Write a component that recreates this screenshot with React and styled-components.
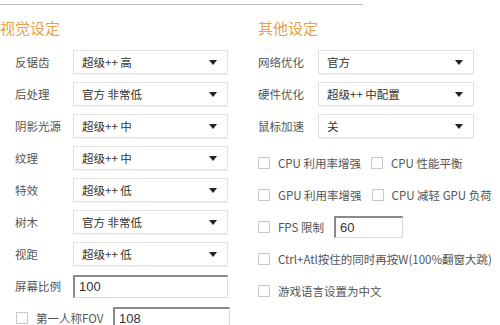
import React from 'react';
import styled, { createGlobalStyle } from 'styled-components';

const leftRows = [
  { label: '反锯齿', value: '超级++ 高' },
  { label: '后处理', value: '官方 非常低' },
  { label: '阴影光源', value: '超级++ 中' },
  { label: '纹理', value: '超级++ 中' },
  { label: '特效', value: '超级++ 低' },
  { label: '树木', value: '官方 非常低' },
  { label: '视距', value: '超级++ 低' },
];

const rightRows = [
  { label: '网络优化', value: '官方' },
  { label: '硬件优化', value: '超级++ 中配置' },
  { label: '鼠标加速', value: '关' },
];

function Select({ value, width }) {
  return (
    <SelectBox width={width}>
      <span>{value}</span>
      <Arrow />
    </SelectBox>
  );
}

function Check({ children }) {
  return (
    <CheckItem>
      <Box />
      <span>{children}</span>
    </CheckItem>
  );
}

export default function App() {
  return (
    <Page>
      <GlobalStyle />
      <TopLine />
      <Columns>
        <LeftCol>
          <Title>视觉设定</Title>
          <Rows>
            {leftRows.map((r) => (
              <Row key={r.label}>
                <Label>{r.label}</Label>
                <Select value={r.value} width={155} />
              </Row>
            ))}
            <Row>
              <Label>屏幕比例</Label>
              <TextInput width={155}>100</TextInput>
            </Row>
            <Row>
              <FovCheck>
                <Check>第一人称FOV</Check>
              </FovCheck>
              <TextInput width={117}>108</TextInput>
            </Row>
          </Rows>
        </LeftCol>
        <RightCol>
          <Title>其他设定</Title>
          <Rows>
            {rightRows.map((r) => (
              <Row key={r.label}>
                <RightLabel>{r.label}</RightLabel>
                <Select value={r.value} width={156} />
              </Row>
            ))}
          </Rows>
          <Checks>
            <CheckLine>
              <Check>CPU 利用率增强</Check>
              <Check>CPU 性能平衡</Check>
            </CheckLine>
            <CheckLine>
              <Check>GPU 利用率增强</Check>
              <Check>CPU 减轻 GPU 负荷</Check>
            </CheckLine>
            <CheckLine>
              <Check>FPS 限制</Check>
              <TextInput width={69} small>60</TextInput>
            </CheckLine>
            <CheckLine>
              <Check>Ctrl+Atl按住的同时再按W(100%翻窗大跳)</Check>
            </CheckLine>
            <CheckLine>
              <Check>游戏语言设置为中文</Check>
            </CheckLine>
          </Checks>
        </RightCol>
      </Columns>
    </Page>
  );
}

const GlobalStyle = createGlobalStyle`
  body {
    margin: 0;
    background: #ffffff;
    font-family: "Noto Sans CJK SC", "Liberation Sans", sans-serif;
    font-size: 11.5px;
    color: #555;
  }
`;

const Page = styled.div`
  width: 500px;
  height: 325px;
  overflow: hidden;
  padding-top: 4px;
  box-sizing: border-box;
`;

const TopLine = styled.div`
  width: 363px;
  height: 1px;
  background: #b8b8b8;
`;

const Columns = styled.div`
  display: flex;
`;

const LeftCol = styled.div`
  width: 258px;
  flex-shrink: 0;
`;

const RightCol = styled.div`
  flex: 1;
  min-width: 0;
`;

const Title = styled.div`
  height: 45px;
  padding-top: 12px;
  box-sizing: border-box;
  font-size: 15px;
  line-height: 22px;
  color: #e5a24c;
`;

const Rows = styled.div`
  display: flex;
  flex-direction: column;
  gap: 8px;
`;

const Row = styled.div`
  display: flex;
  align-items: center;
  height: 24px;
`;

const Label = styled.div`
  width: 58px;
  padding-left: 15px;
  color: #555;
`;

const RightLabel = styled.div`
  width: 60px;
  color: #555;
`;

const FovCheck = styled.div`
  width: 97px;
  padding-left: 16px;
`;

const SelectBox = styled.div`
  width: ${(p) => p.width}px;
  height: 24px;
  box-sizing: border-box;
  border: 1px solid #e2e2e2;
  box-shadow: 0 1px 1px rgba(0, 0, 0, 0.05);
  display: flex;
  align-items: center;
  justify-content: space-between;
  padding: 0 8px;
  color: #333;
  background: #fff;
`;

const Arrow = styled.div`
  width: 0;
  height: 0;
  border-left: 4px solid transparent;
  border-right: 4px solid transparent;
  border-top: 5px solid #222;
  margin-right: 2px;
`;

const TextInput = styled.div`
  width: ${(p) => p.width}px;
  height: ${(p) => (p.small ? 22 : 23)}px;
  box-sizing: border-box;
  border: 1px solid #dcdcdc;
  border-top: 2px solid #8a8a8a;
  border-left: 2px solid #8a8a8a;
  padding-left: 4px;
  display: flex;
  align-items: center;
  color: #333;
  font-family: "Liberation Sans", "Noto Sans CJK SC", sans-serif;
  font-size: 13px;
`;

const Checks = styled.div`
  display: flex;
  flex-direction: column;
  gap: 10px;
  margin-top: 14px;
`;

const CheckLine = styled.div`
  display: flex;
  align-items: center;
  gap: 10px;
  height: 22px;
`;

const CheckItem = styled.div`
  display: flex;
  align-items: center;
  gap: 8px;
  color: #555;
  white-space: nowrap;
`;

const Box = styled.div`
  width: 10px;
  height: 10px;
  border: 1px solid #c8c8c8;
  background: #fff;
  flex-shrink: 0;
`;
